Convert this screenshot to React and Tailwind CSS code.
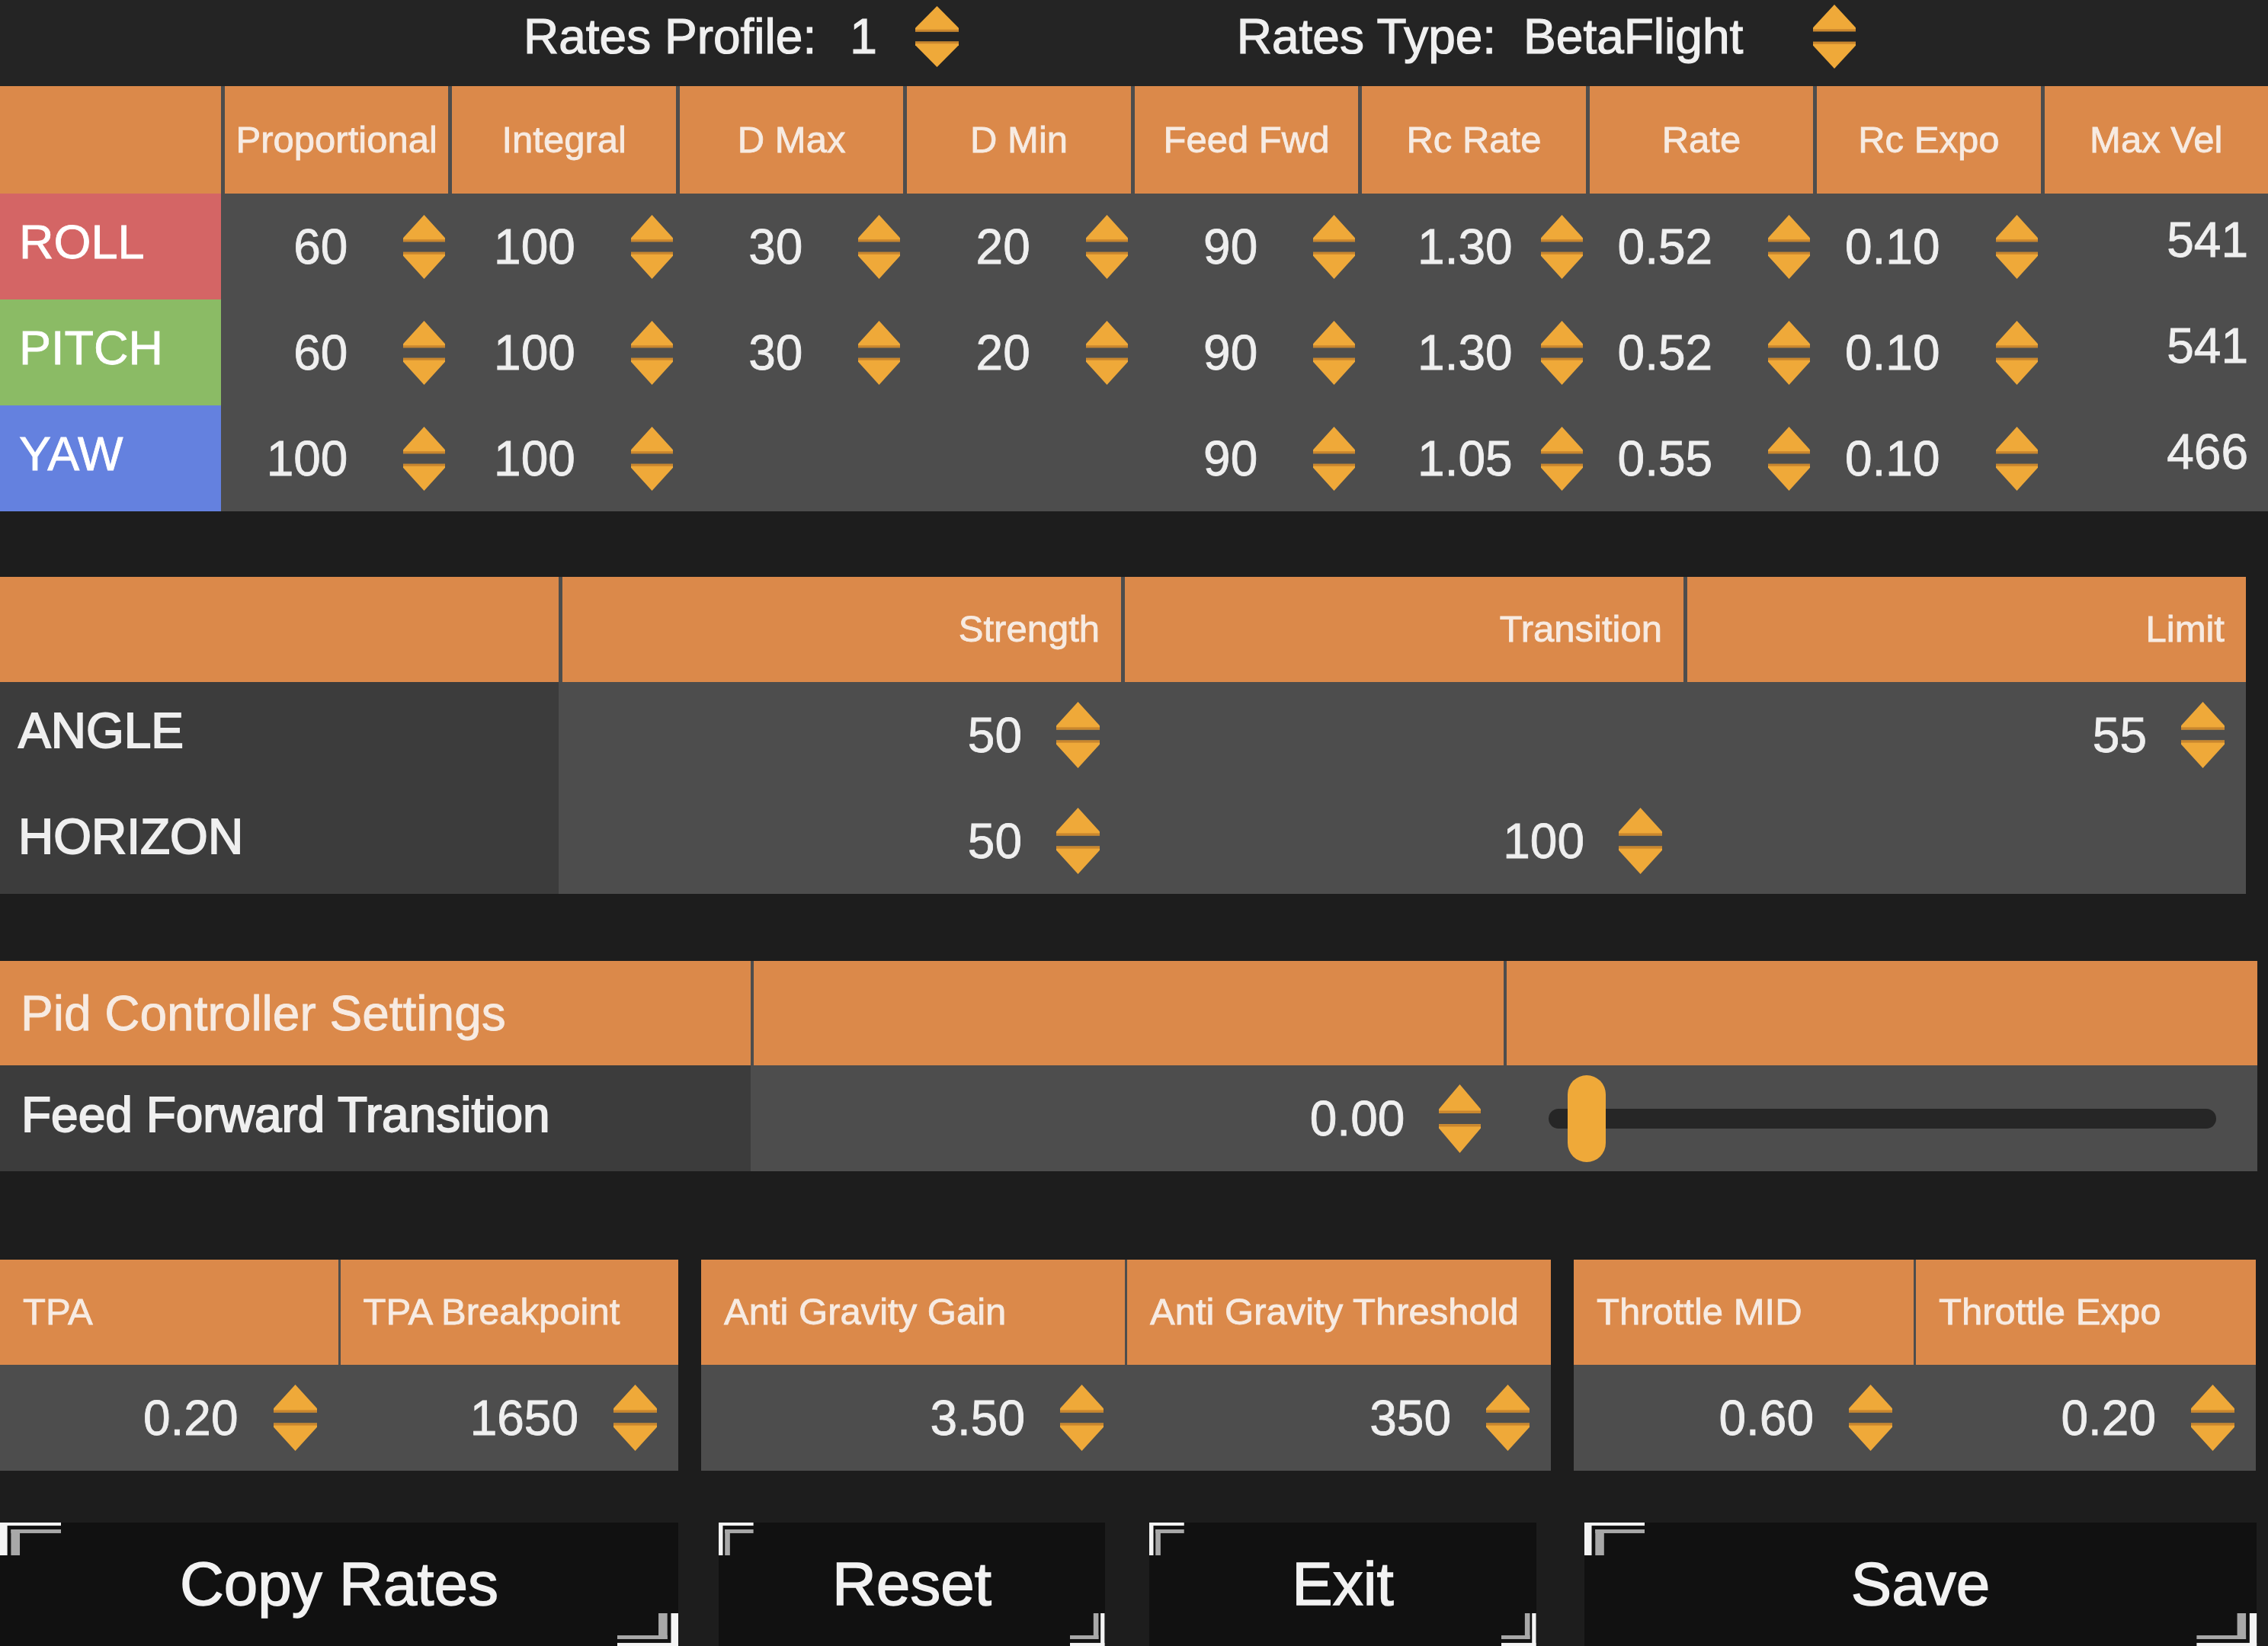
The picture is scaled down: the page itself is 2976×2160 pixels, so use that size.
import { Fragment } from "react";

// up / down stepper arrows, drawn as two triangles with a darker lip
function Spinner({ className = "h-[86px] w-[56px]" }) {
  return (
    <svg viewBox="0 0 56 86" preserveAspectRatio="none" className={`shrink-0 ${className}`}>
      <polygon points="28,0 56,31 56,36 0,36 0,31" fill="#efa939" />
      <rect x="0" y="33" width="56" height="3" fill="#c9862e" />
      <polygon points="0,50 56,50 56,55 28,86 0,55" fill="#efa939" />
      <rect x="0" y="50" width="56" height="3" fill="#c9862e" />
    </svg>
  );
}

function Stepper({ value, gap = "ml-[45px]", size = "h-[87px] w-[57px]" }) {
  return (
    <>
      <span className="text-[64px] leading-none">{value}</span>
      <Spinner className={`${gap} ${size}`} />
    </>
  );
}

function Corner({ className = "" }) {
  return (
    <svg viewBox="0 0 20 20" preserveAspectRatio="none" className={`h-[43px] w-[9%] ${className}`}>
      <rect x="0" y="0" width="20" height="1.9" fill="#f4f4f4" />
      <rect x="0" y="0" width="2.4" height="20" fill="#f4f4f4" />
      <rect x="3.6" y="4.2" width="16.4" height="2.3" fill="#a8a8a8" />
      <rect x="3.6" y="4.2" width="2.9" height="15.8" fill="#a8a8a8" />
    </svg>
  );
}

const rateCols = [
  { name: "Proportional", vals: ["60", "60", "100"] },
  { name: "Integral", vals: ["100", "100", "100"] },
  { name: "D Max", vals: ["30", "30", null] },
  { name: "D Min", vals: ["20", "20", null] },
  { name: "Feed Fwd", vals: ["90", "90", "90"] },
  { name: "Rc Rate", vals: ["1.30", "1.30", "1.05"], tight: true },
  { name: "Rate", vals: ["0.52", "0.52", "0.55"] },
  { name: "Rc Expo", vals: ["0.10", "0.10", "0.10"] },
];

const axes = [
  { name: "ROLL", bg: "bg-[#d46565]", maxVel: "541" },
  { name: "PITCH", bg: "bg-[#8bbb65]", maxVel: "541" },
  { name: "YAW", bg: "bg-[#6481df]", maxVel: "466" },
];

function TopBar() {
  return (
    <div className="flex h-[113px] items-center bg-[#242424] pb-[18px] pl-[687px] text-[64px] leading-none text-[#f0f0f0] [-webkit-text-stroke:1.2px_currentColor]">
      <span>Rates Profile:</span>
      <span className="ml-[44px]">1</span>
      <Spinner className="ml-[50px] h-[80px] w-[57px]" />
      <span className="ml-[365px]">Rates Type:</span>
      <span className="ml-[36px]">BetaFlight</span>
      <Spinner className="ml-[92px] h-[84px] w-[56px]" />
    </div>
  );
}

function RatesTable() {
  return (
    <div className="grid grid-cols-[290px_repeat(9,minmax(0,1fr))] grid-rows-[141px_139px_139px_139px] gap-x-[5px] bg-[#4d4d4d]">
      <div className="bg-[#db894a]" />
      {[...rateCols.map((c) => c.name), "Max Vel"].map((h) => (
        <div key={h} className="flex items-center justify-center whitespace-nowrap bg-[#db894a] text-[49px] text-[#f7ebe2]">
          {h}
        </div>
      ))}
      {axes.map((a, r) => (
        <Fragment key={a.name}>
          <div className={`flex items-center pb-[12px] pl-[25px] text-[63px] leading-none text-white ${a.bg}`}>{a.name}</div>
          {rateCols.map((c) => (
            <div key={c.name} className="flex items-center justify-end pr-[4px]">
              {c.vals[r] && (
                <Stepper value={c.vals[r]} gap={c.tight ? "ml-[37px]" : "ml-[73px]"} size="h-[84px] w-[55px]" />
              )}
            </div>
          ))}
          <div className="flex items-center justify-end pb-[18px] pr-[26px] text-[64px] leading-none">{a.maxVel}</div>
        </Fragment>
      ))}
    </div>
  );
}

function LevelTable() {
  const rows = [
    { name: "ANGLE", vals: ["50", null, "55"] },
    { name: "HORIZON", vals: ["50", "100", null] },
  ];
  return (
    <div className="mt-[86px] grid w-[2947px] grid-cols-4 grid-rows-[138px_139px_139px] gap-x-[5px] bg-[#4d4d4d]">
      <div className="bg-[#db894a]" />
      {["Strength", "Transition", "Limit"].map((h) => (
        <div key={h} className="flex items-center justify-end bg-[#db894a] pr-[28px] text-[49px] text-[#f7ebe2]">
          {h}
        </div>
      ))}
      {rows.map((r) => (
        <Fragment key={r.name}>
          <div className="flex items-center bg-[#3c3c3c] pb-[12px] pl-[24px] text-[64px] leading-none [-webkit-text-stroke:1.8px_currentColor]">
            {r.name}
          </div>
          {r.vals.map((v, i) => (
            <div key={i} className="flex items-center justify-end pr-[28px]">
              {v && <Stepper value={v} />}
            </div>
          ))}
        </Fragment>
      ))}
    </div>
  );
}

function PidTable() {
  return (
    <div className="mt-[88px] grid w-[2962px] grid-cols-3 grid-rows-[137px_139px] gap-x-[4px] bg-[#4d4d4d]">
      <div className="flex items-center whitespace-nowrap bg-[#db894a] pl-[27px] text-[64px] text-[#f7ebe2]">Pid Controller Settings</div>
      <div className="bg-[#db894a]" />
      <div className="bg-[#db894a]" />
      <div className="flex items-center whitespace-nowrap bg-[#3c3c3c] pb-[10px] pl-[28px] text-[64px] leading-none [-webkit-text-stroke:1.8px_currentColor]">
        Feed Forward Transition
      </div>
      <div className="flex items-center justify-end pr-[30px]">
        <Stepper value="0.00" size="h-[90px] w-[55px]" />
      </div>
      <div className="flex items-center pl-[55px] pr-[54px]">
        <div className="relative h-[26px] flex-1 rounded-full bg-[#262626]">
          <div className="absolute left-[25px] top-1/2 h-[114px] w-[50px] -translate-y-1/2 rounded-full bg-[#efa939]" />
        </div>
      </div>
    </div>
  );
}

const throttleGroups = [
  { w: "w-[890px]", items: [["TPA", "0.20"], ["TPA Breakpoint", "1650"]] },
  { w: "w-[1115px]", items: [["Anti Gravity Gain", "3.50"], ["Anti Gravity Threshold", "350"]] },
  { w: "w-[895px]", items: [["Throttle MID", "0.60"], ["Throttle Expo", "0.20"]] },
];

function ThrottleTable() {
  return (
    <div className="mt-[116px] flex gap-x-[30px]">
      {throttleGroups.map((g) => (
        <div key={g.items[0][0]} className={`grid ${g.w} grid-cols-2 grid-rows-[138px_139px] gap-x-[3px] bg-[#4d4d4d]`}>
          {g.items.map(([h]) => (
            <div key={h} className="flex items-center whitespace-nowrap bg-[#db894a] pl-[30px] text-[49px] text-[#f7ebe2]">
              {h}
            </div>
          ))}
          {g.items.map(([h, v]) => (
            <div key={h + v} className="flex items-center justify-end pr-[28px]">
              <Stepper value={v} gap="ml-[46px]" />
            </div>
          ))}
        </div>
      ))}
    </div>
  );
}

const buttons = [
  { label: "Copy Rates", cls: "w-[890px]" },
  { label: "Reset", cls: "ml-[53px] w-[507px]" },
  { label: "Exit", cls: "ml-[58px] w-[508px]" },
  { label: "Save", cls: "ml-[63px] w-[882px]" },
];

function Buttons() {
  return (
    <div className="mt-[68px] flex h-[162px]">
      {buttons.map((b) => (
        <div
          key={b.label}
          className={`relative flex items-center justify-center bg-[#111111] text-[80px] leading-none text-[#f2f2f2] [-webkit-text-stroke:1.4px_currentColor] ${b.cls}`}
        >
          <Corner className="absolute left-0 top-0" />
          <Corner className="absolute bottom-0 right-0 rotate-180" />
          {b.label}
        </div>
      ))}
    </div>
  );
}

export default function App() {
  return (
    <div className="h-[2160px] w-[2976px] overflow-hidden bg-[#1d1d1d] font-['Liberation_Sans',Arial,sans-serif] text-[#efefef] [-webkit-text-stroke:0.8px_currentColor]">
      <TopBar />
      <RatesTable />
      <LevelTable />
      <PidTable />
      <ThrottleTable />
      <Buttons />
    </div>
  );
}
